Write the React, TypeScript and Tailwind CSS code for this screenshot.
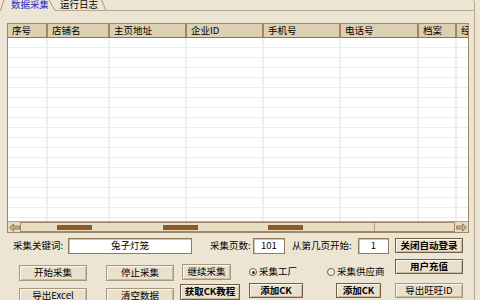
import React from "react";

const cols = [
  { w: 38, t: "序号" },
  { w: 62, t: "店铺名" },
  { w: 77, t: "主页地址" },
  { w: 77, t: "企业ID" },
  { w: 77, t: "手机号" },
  { w: 78, t: "电话号" },
  { w: 38, t: "档案" },
  { w: 40, t: "经" },
];

function Btn({
  children,
  className = "",
  bold = false,
}: {
  children: React.ReactNode;
  className?: string;
  bold?: boolean;
}) {
  return (
    <div
      className={
        "flex items-center justify-center whitespace-nowrap bg-[#e9e1cd] shadow-[inset_1px_1px_0_#fbf6ea,inset_-1px_-1px_0_#c9ba9b] " +
        (bold
          ? "border border-[#6f604a] font-bold "
          : "border border-[#a8997c] ") +
        className
      }
    >
      {children}
    </div>
  );
}

function Radio({ checked, label }: { checked: boolean; label: string }) {
  return (
    <div className="flex items-center h-[16px] gap-[2px] whitespace-nowrap">
      <div className="shrink-0 w-[8px] h-[8px] rounded-full border border-[#6f604a] bg-[#f4efe2] flex items-center justify-center">
        {checked && <div className="w-[3px] h-[3px] rounded-full bg-[#3a2f20]" />}
      </div>
      <span>{label}</span>
    </div>
  );
}

function Input({ value, className = "" }: { value: string; className?: string }) {
  return (
    <div
      className={
        "h-[16px] bg-white border border-[#8d7b5c] shadow-[inset_1px_1px_0_#cfc4ae] flex items-center justify-center " +
        className
      }
    >
      {value}
    </div>
  );
}

export default function App() {
  const rows = Array.from({ length: 19 });
  return (
    <div className="w-[480px] h-[300px] overflow-hidden bg-[#ece5d3] text-[9.5px] leading-none text-black font-['Noto_Sans_CJK_SC',sans-serif] flex flex-col">
      {/* Tabs */}
      <div className="h-[11px] flex items-end shrink-0">
        <svg width="5" height="11" className="shrink-0">
          <line x1="0.5" y1="11" x2="4" y2="0" stroke="#a89878" strokeWidth="1" />
        </svg>
        <div className="h-[11px] w-[43px] shrink-0 pl-[6px] flex items-end text-[#2a2ad0] overflow-hidden whitespace-nowrap">
          <span className="leading-[9px] pb-[2px]">数据采集</span>
        </div>
        <svg width="9" height="11" className="shrink-0">
          <line x1="1" y1="0" x2="7" y2="10.5" stroke="#a89878" strokeWidth="1" />
          <line x1="7" y1="10.5" x2="9" y2="10.5" stroke="#b7a88c" strokeWidth="1" />
        </svg>
        <div className="h-[11px] w-[44px] shrink-0 pl-[3px] flex items-end border-b border-[#b7a88c] overflow-hidden whitespace-nowrap">
          <span className="leading-[9px] pb-[1px]">运行日志</span>
        </div>
        <svg width="7" height="11" className="shrink-0">
          <line x1="0.5" y1="0" x2="5" y2="10.5" stroke="#a89878" strokeWidth="1" />
          <line x1="0" y1="10.5" x2="7" y2="10.5" stroke="#b7a88c" strokeWidth="1" />
        </svg>
        <div className="w-[367px] h-[11px] border-b border-r border-[#b7a88c] rounded-tr-[3px]" />
      </div>

      {/* Panel */}
      <div className="w-[475px] flex-1 border-r border-[#b7a88c] flex flex-col">
        <div className="pl-[7px] pt-[12px]">
          <div className="w-[462px] h-[210px] border border-[#9d8866] flex flex-col bg-white">
            {/* header */}
            <div className="h-[14px] flex bg-[#dccfb2] border-b border-[#8e7550] shrink-0 overflow-hidden">
              {cols.map((c, i) => (
                <div
                  key={i}
                  style={{ width: c.w }}
                  className={
                    "shrink-0 flex items-center pl-[4px] whitespace-nowrap overflow-hidden " +
                    (i > 0 ? "border-l-2 border-[#a08760]" : "")
                  }
                >
                  {c.t}
                </div>
              ))}
            </div>
            {/* body */}
            <div className="flex-1 overflow-hidden">
              {rows.map((_, r) => (
                <div key={r} className="h-[10px] flex border-b border-[#ececec]">
                  {cols.map((c, i) => (
                    <div
                      key={i}
                      style={{ width: c.w }}
                      className={"shrink-0 " + (i > 0 ? "border-l-2 border-[#efefef]" : "")}
                    />
                  ))}
                </div>
              ))}
            </div>
            {/* scrollbar */}
            <div className="h-[11px] flex shrink-0 bg-[#e6dcc6] border-t border-[#b6a483]">
              <div className="w-[12px] flex items-center justify-center">
                <svg width="11" height="9" viewBox="0 0 11 9">
                  <path d="M0.5 4.5 L4.5 0.8 L4.5 3 L10.5 3 L10.5 6 L4.5 6 L4.5 8.2 Z" fill="#c7ae86" stroke="#8a6f48" strokeWidth="0.8" />
                </svg>
              </div>
              <div className="flex-1 border border-[#9f8a66] bg-[#e8dcc3] flex items-center">
                <div className="ml-[36px] w-[35px] h-[5px] bg-[#8b5a26]" />
                <div className="ml-[71px] w-[35px] h-[5px] bg-[#8b5a26]" />
                <div className="ml-[70px] w-[35px] h-[5px] bg-[#8b5a26]" />
                <div className="ml-[71px] w-px h-full bg-[#b8a27e]" />
              </div>
              <div className="w-[13px] flex items-center justify-center">
                <svg width="11" height="9" viewBox="0 0 11 9">
                  <path d="M10.5 4.5 L6.5 0.8 L6.5 3 L0.5 3 L0.5 6 L6.5 6 L6.5 8.2 Z" fill="#c7ae86" stroke="#8a6f48" strokeWidth="0.8" />
                </svg>
              </div>
            </div>
          </div>
        </div>

        {/* controls */}
        <div className="flex">
          <div className="w-[395px] shrink-0 flex flex-col">
            <div className="mt-[5px] flex items-center whitespace-nowrap">
              <span className="ml-[13px] w-[55px] shrink-0">采集关键词:</span>
              <Input value="兔子灯笼" className="w-[124px] shrink-0" />
              <span className="ml-[18px] w-[43px] shrink-0">采集页数:</span>
              <Input value="101" className="w-[32px] shrink-0" />
              <span className="ml-[7px] w-[66px] shrink-0">从第几页开始:</span>
              <Input value="1" className="w-[31px] shrink-0" />
            </div>
            <div className="flex">
              <div className="ml-[19px] w-[68px] shrink-0 mt-[11px] flex flex-col gap-[7px]">
                <Btn className="h-[16px]">开始采集</Btn>
                <Btn className="h-[16px]">导出Excel</Btn>
              </div>
              <div className="ml-[19px] w-[68px] shrink-0 mt-[11px] flex flex-col gap-[7px]">
                <Btn className="h-[16px]">停止采集</Btn>
                <Btn className="h-[16px]">清空数据</Btn>
              </div>
              <div className="ml-[6px] w-[61px] shrink-0 mt-[10px] flex flex-col gap-[4px]">
                <Btn className="ml-[2px] w-[49px] h-[16px]">继续采集</Btn>
                <Btn bold className="w-[60px] h-[16px]">获取CK教程</Btn>
              </div>
              <div className="ml-[8px] w-[54px] shrink-0 mt-[10px] flex flex-col gap-[3px]">
                <Radio checked label="采集工厂" />
                <Btn bold className="w-[54px] h-[15px]">添加CK</Btn>
              </div>
              <div className="ml-[24px] w-[60px] shrink-0 mt-[10px] flex flex-col gap-[3px]">
                <Radio checked={false} label="采集供应商" />
                <Btn bold className="ml-[9px] w-[45px] h-[15px]">添加CK</Btn>
              </div>
            </div>
          </div>
          <div className="w-[68px] shrink-0 mt-[5px] flex flex-col">
            <Btn bold className="h-[15px]">关闭自动登录</Btn>
            <Btn bold className="h-[15px] mt-[6px]">用户充值</Btn>
            <Btn className="h-[15px] mt-[9px]">导出旺旺ID</Btn>
          </div>
        </div>
      </div>
    </div>
  );
}
